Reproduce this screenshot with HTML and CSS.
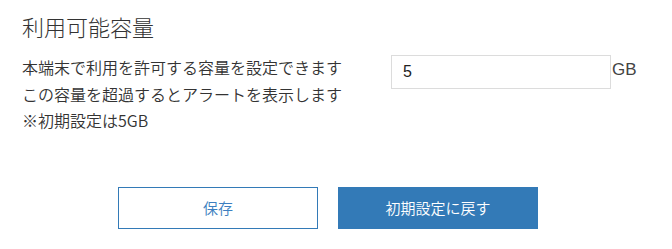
FILE: index.html
```html
<!DOCTYPE html>
<html lang="ja">
<head>
<meta charset="utf-8">
<title>利用可能容量</title>
<link rel="stylesheet" href="styles.css">
</head>
<body>
<div class="page">
  <h1 class="title">利用可能容量</h1>
  <div class="settings">
    <div class="desc">
      <p>本端末で利用を許可する容量を設定できます</p>
      <p>この容量を超過するとアラートを表示します</p>
      <p>※初期設定は5GB</p>
    </div>
    <div class="field">
      <input class="input" type="text" value="5">
      <span class="unit">GB</span>
    </div>
  </div>
  <div class="actions">
    <button class="btn btn-outline" type="button">保存</button>
    <button class="btn btn-primary" type="button">初期設定に戻す</button>
  </div>
</div>
</body>
</html>
```
FILE: styles.css
```css
html, body {
  margin: 0;
  background: #fff;
}
body {
  font-family: "Noto Sans CJK JP", sans-serif;
  color: #333;
}
.page {
  padding: 0 22px;
}
.title {
  margin: 11px 0 0;
  font-size: 22px;
  line-height: 30px;
  font-weight: 300;
  color: #333;
}
.settings {
  display: flex;
  margin-top: 13px;
}
.desc {
  width: 369px;
  font-size: 16px;
  line-height: 26.5px;
  font-weight: 350;
}
.desc p {
  margin: 0;
}
.field {
  display: flex;
  align-items: center;
  margin-top: 1px;
  height: 34px;
}
.input {
  box-sizing: border-box;
  width: 220px;
  height: 34px;
  border: 1px solid #dcdcdc;
  padding: 0 11px;
  font-family: "Liberation Sans", sans-serif;
  font-size: 16px;
  color: #222;
  outline: none;
  margin: 0;
}
.unit {
  margin-left: 1px;
  font-family: "Liberation Sans", sans-serif;
  font-size: 17px;
  color: #444;
  margin-top: -4px;
}
.actions {
  display: flex;
  gap: 20px;
  margin-top: 53px;
  margin-left: 96px;
}
.btn {
  box-sizing: border-box;
  width: 200px;
  height: 42px;
  font-family: "Noto Sans CJK JP", sans-serif;
  font-size: 15px;
  font-weight: 350;
  border: 1px solid #337ab7;
  margin: 0;
  padding: 0;
  cursor: pointer;
}
.btn-outline {
  background: #fff;
  color: #3d7fc0;
}
.btn-primary {
  background: #337ab7;
  color: #fff;
}
```
